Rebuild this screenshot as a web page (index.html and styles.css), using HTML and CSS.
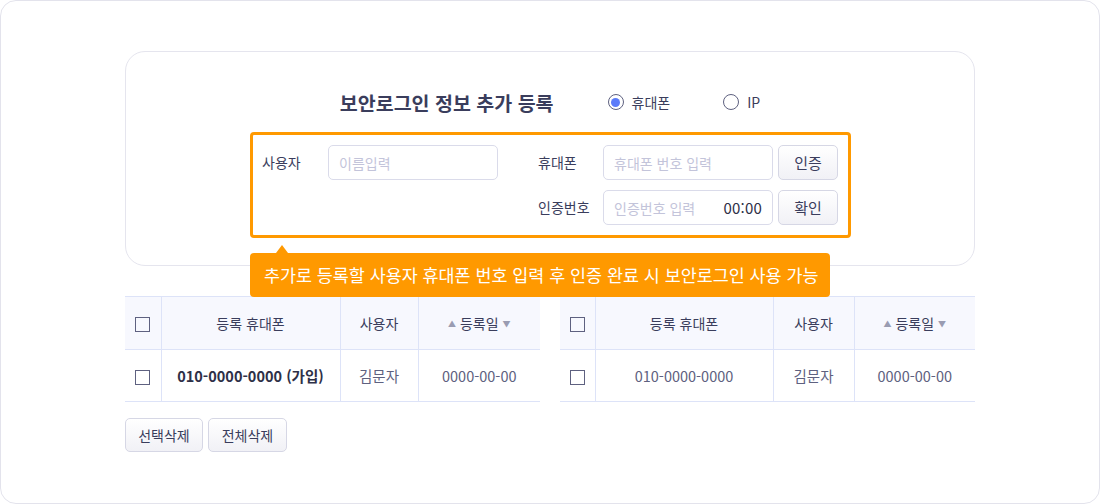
FILE: index.html
```html
<!DOCTYPE html>
<html lang="ko">
<head>
<meta charset="utf-8">
<title>보안로그인 정보 추가 등록</title>
<link rel="stylesheet" href="styles.css">
</head>
<body>
<div class="frame">
  <section class="card">
    <div class="title-row">
      <h1 class="title">보안로그인 정보 추가 등록</h1>
      <label class="radio"><span class="radio-dot checked"></span><span>휴대폰</span></label>
      <label class="radio"><span class="radio-dot"></span><span>IP</span></label>
    </div>
    <div class="form-box">
      <div class="form-grid">
        <span class="label">사용자</span>
        <div class="input"><span class="ph">이름입력</span></div>
        <span class="label label2">휴대폰</span>
        <div class="input"><span class="ph">휴대폰 번호 입력</span></div>
        <button class="btn btn-side">인증</button>

        <span></span>
        <span></span>
        <span class="label label2">인증번호</span>
        <div class="input"><span class="ph">인증번호 입력</span><span class="timer">00:00</span></div>
        <button class="btn btn-side">확인</button>
      </div>
      <div class="tooltip">추가로 등록할 사용자 휴대폰 번호 입력 후 인증 완료 시 보안로그인 사용 가능</div>
    </div>
  </section>

  <div class="tables">
    <table class="list">
      <colgroup><col class="c1"><col class="c2"><col class="c3"><col class="c4"></colgroup>
      <thead>
        <tr><th><span class="chk"></span></th><th>등록 휴대폰</th><th>사용자</th><th><span class="tri">▲</span> 등록일 <span class="tri">▼</span></th></tr>
      </thead>
      <tbody>
        <tr><td><span class="chk"></span></td><td class="strong">010-0000-0000 (가입)</td><td>김문자</td><td>0000-00-00</td></tr>
      </tbody>
    </table>
    <table class="list">
      <colgroup><col class="r1"><col class="r2"><col class="r3"><col class="r4"></colgroup>
      <thead>
        <tr><th><span class="chk"></span></th><th>등록 휴대폰</th><th>사용자</th><th><span class="tri">▲</span> 등록일 <span class="tri">▼</span></th></tr>
      </thead>
      <tbody>
        <tr><td><span class="chk"></span></td><td>010-0000-0000</td><td>김문자</td><td>0000-00-00</td></tr>
      </tbody>
    </table>
  </div>

  <div class="actions">
    <button class="btn btn-act">선택삭제</button>
    <button class="btn btn-act btn-act2">전체삭제</button>
  </div>
</div>
</body>
</html>
```
FILE: styles.css
```css
* { box-sizing: border-box; }
html, body { margin: 0; padding: 0; background: #fff; }
body {
  font-family: "Noto Sans CJK KR", "Noto Sans", "Liberation Sans", sans-serif;
  color: #3a3d5c;
}
.frame {
  width: 1100px;
  height: 504px;
  border: 1px solid #e3e3ec;
  border-radius: 16px;
  padding: 50px 124px 0;
}
.card {
  height: 215px;
  border: 1px solid #e5e5ee;
  border-radius: 20px;
  padding-top: 35px;
}
.title-row {
  height: 30px;
  display: flex;
  align-items: center;
  justify-content: center;
}
.title {
  margin: 0 54px 0 0;
  font-size: 19.5px;
  font-weight: 700;
  color: #3a3d5c;
}
.radio {
  display: flex;
  align-items: center;
  font-size: 14px;
  color: #3a3d5c;
}
.radio + .radio { margin-left: 53px; }
.radio-dot {
  width: 16px;
  height: 16px;
  border: 1.5px solid #5e6180;
  border-radius: 50%;
  margin-right: 8px;
  display: flex;
  align-items: center;
  justify-content: center;
}
.radio-dot.checked::after {
  content: "";
  width: 9px;
  height: 9px;
  border-radius: 50%;
  background: #5b7bfa;
}
.form-box {
  position: relative;
  margin: 15px 0 0 124px;
  width: 601px;
  height: 106px;
  border: 3px solid #ff9900;
  border-radius: 4px;
  padding: 10px 10px 10px 9px;
}
.form-grid {
  display: grid;
  grid-template-columns: 66px 170px 105px 170px 65px;
  grid-auto-rows: 35px;
  row-gap: 10px;
  align-items: center;
}
.label { font-size: 14px; color: #3a3d5c; margin-top: -2px; }
.label2 { padding-left: 40px; }
.input {
  height: 35px;
  border: 1px solid #dadbea;
  border-radius: 5px;
  background: #fff;
  display: flex;
  align-items: center;
  justify-content: space-between;
  padding: 0 10px 0 10px;
}
.ph { font-size: 14px; color: #c3c4da; }
.timer { font-size: 15px; color: #2e3047; letter-spacing: 0.2px; }
.btn {
  font-family: inherit;
  font-size: 14px;
  color: #3a3d5c;
  border: 1px solid #d6d7e5;
  border-radius: 5px;
  background: linear-gradient(#ffffff, #f1f1f6);
  padding: 0;
  cursor: pointer;
}
.btn-side { width: 60px; height: 35px; justify-self: end; font-size: 15px; }
.tooltip {
  position: absolute;
  left: -3px;
  top: calc(100% + 18px);
  width: 580px;
  height: 44px;
  background: #ff9900;
  border-radius: 4px;
  color: #fff;
  font-size: 17.4px;
  line-height: 44px;
  padding-left: 14px;
  white-space: nowrap;
  z-index: 2;
}
.tooltip::before {
  content: "";
  position: absolute;
  left: 26px;
  top: -8px;
  border-left: 6px solid transparent;
  border-right: 6px solid transparent;
  border-bottom: 8px solid #ff9900;
}
.tables {
  display: flex;
  gap: 20px;
  margin-top: 30px;
}
.list {
  width: 415px;
  table-layout: fixed;
  border-collapse: collapse;
  font-size: 14px;
}
.c1 { width: 36px; } .c2 { width: 179px; } .c3 { width: 78px; } .c4 { width: 122px; }
.r1 { width: 35px; } .r2 { width: 178px; } .r3 { width: 81px; } .r4 { width: 121px; }
.list th, .list td {
  text-align: center;
  padding: 0;
  border-bottom: 1px solid #dde3f8;
}
.list th + th, .list td + td { border-left: 1px solid #dde3f8; }
.list thead tr { border-top: 1px solid #dde3f8; }
.list th {
  height: 53px;
  background: #f7f8fe;
  font-weight: 400;
  color: #3a3d5c;
}
.list td {
  height: 52px;
  color: #5e6180;
  font-size: 14.5px;
}
.list td.strong { font-weight: 700; color: #2e3047; font-size: 14.5px; }
.tri { font-size: 8px; color: #9a9cb2; vertical-align: 2px; }
.chk {
  display: inline-block;
  width: 15px;
  height: 15px;
  border: 1.5px solid #5e6180;
  vertical-align: middle;
  margin-top: -2px;
}
.actions {
  display: flex;
  gap: 5px;
  margin-top: 16px;
}
.btn-act { width: 78px; height: 34px; }
.btn-act2 { width: 79px; }
```
